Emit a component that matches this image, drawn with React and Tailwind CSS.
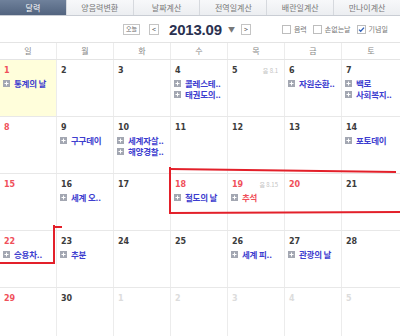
import React from 'react';

const tabs = ['달력', '양음력변환', '날짜계산', '전역일계산', '배란일계산', '만나이계산'];
const weekdays = ['일', '월', '화', '수', '목', '금', '토'];

// kind: 'sun' / 'hol' red number, 'next' gray (other month)
const weeks = [
  [
    { n: 1, kind: 'sun', today: true, ev: ['통계의 날'] },
    { n: 2 },
    { n: 3 },
    { n: 4, ev: ['콜레스테..', '태권도의..'] },
    { n: 5, lunar: '음 8.1' },
    { n: 6, ev: ['자원순환..'] },
    { n: 7, ev: ['백로', '사회복지..'] },
  ],
  [
    { n: 8, kind: 'sun' },
    { n: 9, ev: ['구구데이'] },
    { n: 10, ev: ['세계자살..', '해양경찰..'] },
    { n: 11 },
    { n: 12 },
    { n: 13 },
    { n: 14, ev: ['포토데이'] },
  ],
  [
    { n: 15, kind: 'sun' },
    { n: 16, ev: ['세계 오..'] },
    { n: 17 },
    { n: 18, kind: 'hol', ev: ['철도의 날'] },
    { n: 19, kind: 'hol', lunar: '음 8.15', ev: ['추석'], redEv: true },
    { n: 20, kind: 'hol' },
    { n: 21 },
  ],
  [
    { n: 22, kind: 'sun', ev: ['승용차..'] },
    { n: 23, ev: ['추분'] },
    { n: 24 },
    { n: 25 },
    { n: 26, ev: ['세계 피..'] },
    { n: 27, ev: ['관광의 날'] },
    { n: 28 },
  ],
  [
    { n: 29, kind: 'sun' },
    { n: 30 },
    { n: 1, kind: 'next' },
    { n: 2, kind: 'next' },
    { n: 3, kind: 'next' },
    { n: 4, kind: 'next' },
    { n: 5, kind: 'next' },
  ],
];

function PlusIcon() {
  return (
    <svg width="7" height="7" viewBox="0 0 7 7" className="shrink-0">
      <rect width="7" height="7" fill="#a3a7b2" />
      <path d="M3.5 1.5v4M1.5 3.5h4" stroke="#fff" strokeWidth="1" />
    </svg>
  );
}

function Checkbox({ label, checked }) {
  return (
    <label className="flex items-center gap-[3px] text-[7px] text-[#777]">
      <span className="w-[9px] h-[9px] border border-[#bdbdbd] bg-white flex items-center justify-center">
        {checked && (
          <svg width="7" height="7" viewBox="0 0 7 7">
            <path d="M1 3.6l1.7 1.7L6 1.6" stroke="#2e5fb8" strokeWidth="1.3" fill="none" />
          </svg>
        )}
      </span>
      {label}
    </label>
  );
}

function DayCell({ day }) {
  const numColor =
    day.kind === 'sun' || day.kind === 'hol'
      ? 'text-[#f0505a]'
      : day.kind === 'next'
      ? 'text-[#dcdcdc]'
      : 'text-[#3c3c3c]';
  return (
    <div
      className={`h-[56px] border-r border-[#ececec] last:border-r-0 pl-[3px] pr-[6px] pt-[6px] overflow-hidden ${
        day.today ? 'bg-[#fffedb]' : 'bg-white'
      }`}
    >
      <div className="flex items-center justify-between h-[9px] pl-[1px]">
        <span className={`font-['DejaVu_Sans'] font-bold text-[8px] leading-none ${numColor}`}>{day.n}</span>
        {day.lunar && <span className="text-[6px] leading-none text-[#c4c4c4]">{day.lunar}</span>}
      </div>
      <div className="mt-[3px] flex flex-col gap-[1px]">
        {(day.ev || []).map((e, i) => (
          <div key={i} className="flex items-center gap-[4px] h-[10px]">
            <PlusIcon />
            <span
              className={`text-[8.5px] font-bold leading-none whitespace-nowrap tracking-[-0.2px] ${
                day.redEv ? 'text-[#f0505a]' : 'text-[#3d3dcf]'
              }`}
            >
              {e}
            </span>
          </div>
        ))}
      </div>
    </div>
  );
}

export default function App() {
  return (
    <div className="relative w-[400px] h-[336px] overflow-hidden bg-white font-['Noto_Sans_CJK_KR',sans-serif]">
      {/* Tabs */}
      <div className="flex h-[16px] border-b border-[#c9cdd4]">
        {tabs.map((t, i) => (
          <div
            key={t}
            className={`flex-1 flex items-center justify-center text-[8px] leading-none ${
              i === 0
                ? 'bg-gradient-to-b from-[#6f819b] to-[#52647f] text-white'
                : 'bg-gradient-to-b from-[#f7f8fa] to-[#eceef1] text-[#777] border-l border-[#d6d9de]'
            }`}
          >
            {t}
          </div>
        ))}
      </div>

      {/* Toolbar */}
      <div className="flex items-center h-[26px] pl-[123px]">
        <button className="h-[11px] px-[2px] border border-[#c4c4c4] bg-white text-[6px] leading-none text-[#666]">
          오늘
        </button>
        <button className="ml-[9px] w-[10px] h-[11px] border border-[#c4c4c4] bg-white text-[7px] leading-none text-[#555] flex items-center justify-center">
          &lt;
        </button>
        <span className="ml-[10px] font-['Liberation_Sans'] font-bold text-[15px] leading-none text-[#2a3150] tracking-[-0.2px]">
          2013.09
        </span>
        <span className="ml-[6px] text-[7px] text-[#777] leading-none">▼</span>
        <button className="ml-[6px] w-[10px] h-[11px] border border-[#c4c4c4] bg-white text-[7px] leading-none text-[#555] flex items-center justify-center">
          &gt;
        </button>
        <div className="ml-[31px] flex items-center gap-[6px]">
          <Checkbox label="음력" />
          <Checkbox label="손없는날" />
          <Checkbox label="기념일" checked />
        </div>
      </div>

      {/* Weekday header */}
      <div className="grid grid-cols-[57px_57px_57px_57px_57px_57px_58px] h-[18px] border-t border-b border-[#e4e4e4]">
        {weekdays.map((w) => (
          <div
            key={w}
            className="flex items-center justify-center border-r border-[#ececec] last:border-r-0 text-[8px] text-[#888] leading-none"
          >
            {w}
          </div>
        ))}
      </div>

      {/* Weeks */}
      {weeks.map((week, wi) => (
        <div
          key={wi}
          className="grid grid-cols-[57px_57px_57px_57px_57px_57px_58px] border-b border-[#e8e8e8]"
        >
          {week.map((d, di) => (
            <DayCell key={di} day={d} />
          ))}
        </div>
      ))}

      {/* Hand-drawn red marks */}
      <svg className="absolute left-0 top-0 pointer-events-none" width="400" height="336">
        <g stroke="#e3202a" strokeWidth="2" fill="none">
          <path d="M170 167 L170 214" />
          <path d="M170 169 L396 172" />
          <path d="M170 213 L400 212" />
          <path d="M54 225 L54 263" />
          <path d="M53 227 L62 227" />
          <path d="M0 263 L55 263" />
        </g>
      </svg>
    </div>
  );
}
